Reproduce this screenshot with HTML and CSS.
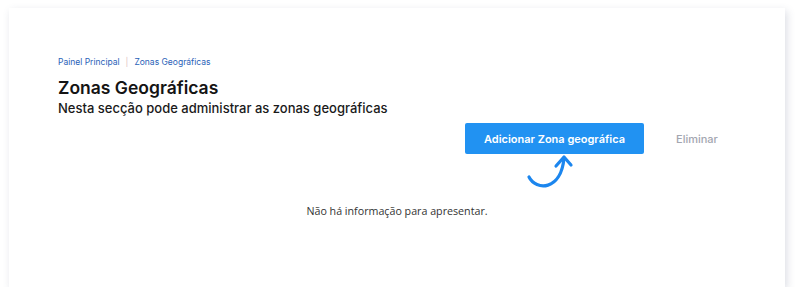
FILE: index.html
```html
<!DOCTYPE html>
<html>
  <head>
    <meta charset="UTF-8" />
    <title>Zonas Geográficas</title>
    <link rel="stylesheet" href="styles.css">
  </head>

  <body>
    <div class="page-card">
      <div class="breadcrumb">
        <a href="#">Painel Principal</a>
        <span class="sep">|</span>
        <a href="#">Zonas Geográficas</a>
      </div>

      <h2 class="page-title">Zonas Geográficas</h2>
      <p class="page-subtitle">Nesta secção pode administrar as zonas geográficas</p>

      <div class="actions">
        <div class="add-wrap">
          <button class="btn-add" type="button">Adicionar Zona geográfica</button>
          <svg class="hint-arrow" width="50" height="40" viewBox="0 0 50 40">
            <path d="M5 24 C 12 38, 37 38, 40 5" fill="none" stroke="#1c86ee" stroke-width="3.2" stroke-linecap="round" />
            <path d="M32 13 L40 4 L47 12" fill="none" stroke="#1c86ee" stroke-width="3.2" stroke-linecap="round" stroke-linejoin="round" />
          </svg>
        </div>
        <button class="btn-remove" type="button">Eliminar</button>
      </div>

      <div class="empty">Não há informação para apresentar.</div>
    </div>
  </body>
</html>
```

FILE: styles.css
```css
* {
  box-sizing: border-box;
}

body {
  margin: 0;
  background-color: #fff;
  font-family: "Inter", "Liberation Sans", sans-serif;
  color: #111;
}

.page-card {
  margin: 8px 0 0 9px;
  width: 776px;
  height: 279px;
  background-color: #fff;
  box-shadow: 2px 3px 8px rgba(60, 70, 110, 0.18);
  padding: 48px 66px 0 49px;
}

.breadcrumb {
  font-size: 8.5px;
  line-height: 12px;
  display: flex;
  align-items: center;
}

.breadcrumb a {
  color: #2a62b8;
  text-decoration: none;
}

.breadcrumb .sep {
  color: #e3c2c6;
  margin: 0 6px;
}

.page-title {
  font-size: 17.5px;
  font-weight: 600;
  margin: 9px 0 0;
  line-height: 22px;
  color: #141414;
}

.page-subtitle {
  font-size: 13px;
  font-weight: 500;
  margin: 0;
  line-height: 18px;
  color: #1a1a1a;
}

.actions {
  display: flex;
  justify-content: flex-end;
  align-items: flex-start;
  margin-top: 6px;
}

.add-wrap {
  position: relative;
}

.btn-add {
  border: none;
  outline: none;
  width: 179px;
  height: 31px;
  border-radius: 2px;
  background-color: #2192f2;
  color: #fff;
  font-family: inherit;
  font-size: 11px;
  font-weight: 600;
  cursor: pointer;
}

.hint-arrow {
  position: absolute;
  left: 59px;
  top: 30px;
}

.btn-remove {
  border: none;
  outline: none;
  background: none;
  width: 75px;
  height: 31px;
  padding: 0 0 0 32px;
  text-align: left;
  font-family: inherit;
  font-size: 11px;
  font-weight: 500;
  color: #a3a6b0;
  cursor: pointer;
}

.empty {
  margin-top: 50px;
  margin-left: -49px;
  margin-right: -66px;
  text-align: center;
  font-family: "Open Sans", sans-serif;
  font-size: 10.7px;
  color: #333;
}
```
